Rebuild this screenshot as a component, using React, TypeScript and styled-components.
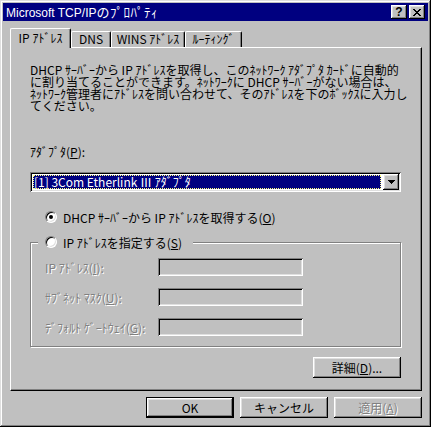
import React from 'react';
import styled, { createGlobalStyle, css } from 'styled-components';

const face = `"Noto Sans CJK JP", "Liberation Sans", sans-serif`;

const GlobalStyle = createGlobalStyle`
    html, body {
        margin: 0;
        padding: 0;
        background: #c0c0c0;
    }
    body {
        font-family: ${face};
        font-size: 12px;
        color: #000;
    }
`;

const raised = css`
    box-shadow: inset -1px -1px #000, inset 1px 1px #fff, inset -2px -2px #808080, inset 2px 2px #dfdfdf;
`;
const sunken = css`
    box-shadow: inset 1px 1px #808080, inset -1px -1px #fff, inset 2px 2px #000, inset -2px -2px #dfdfdf;
`;

const Window = styled.div`
    width: 431px;
    height: 427px;
    box-sizing: border-box;
    padding: 3px;
    background: #c0c0c0;
    box-shadow: inset -1px -1px #000, inset 1px 1px #dfdfdf, inset -2px -2px #808080, inset 2px 2px #fff;
    display: flex;
    flex-direction: column;
`;

const TitleBar = styled.div`
    height: 18px;
    display: flex;
    align-items: center;
    gap: 2px;
    padding: 0 3px 0 3px;
    background: #000080;
    color: #fff;
`;

const TitleText = styled.span`
    flex: 1;
    font-family: 'Liberation Sans', 'Noto Sans CJK JP', sans-serif;
    font-size: 12px;
    line-height: 18px;
    white-space: nowrap;
`;

const TitleKana = styled.span`
    font-family: 'Noto Sans CJK JP', sans-serif;
    font-size: 13px;
    letter-spacing: 0.5px;
`;

const CaptionButton = styled.div`
    width: 16px;
    height: 14px;
    box-sizing: border-box;
    background: #c0c0c0;
    color: #000;
    display: flex;
    align-items: center;
    justify-content: center;
    font: bold 12px 'Liberation Sans', sans-serif;
    line-height: 14px;
    ${raised}
`;

const Body = styled.div`
    display: flex;
    flex-direction: column;
    padding: 7px 5px 0 7px;
`;

const TabStrip = styled.div`
    display: flex;
    align-items: flex-end;
    height: 20px;
    margin-bottom: -1px;
    position: relative;
    z-index: 1;
`;

const Tab = styled.div<{ $w: number; $active?: boolean }>`
    width: ${(p) => p.$w}px;
    box-sizing: border-box;
    background: #c0c0c0;
    border-top: 1px solid #fff;
    border-left: 1px solid #fff;
    border-right: 1px solid #000;
    border-radius: 2px 2px 0 0;
    box-shadow: inset -1px 0 #808080;
    text-align: center;
    white-space: nowrap;
    line-height: 14px;
    ${(p) =>
        p.$active
            ? css`
                  height: 20px;
                  padding-top: 2px;
              `
            : css`
                  height: 16px;
                  margin-bottom: 1px;
                  padding-top: 0;
              `}
`;

const Panel = styled.div`
    width: 412px;
    box-sizing: border-box;
    border-top: 1px solid #fff;
    border-left: 1px solid #fff;
    border-right: 1px solid #000;
    border-bottom: 1px solid #000;
    box-shadow: inset -1px -1px #808080;
    padding: 16px 20px 12px 19px;
    display: flex;
    flex-direction: column;
`;

const Paragraph = styled.div`
    line-height: 12px;
    height: 48px;
`;

const Line = styled.div`
    white-space: nowrap;
`;

const FieldLabel = styled.div`
    margin-top: 34px;
    line-height: 12px;
    height: 12px;
`;

const U = styled.span`
    text-decoration: underline;
`;

const Select = styled.div`
    margin-top: 14px;
    height: 20px;
    box-sizing: border-box;
    padding: 2px;
    display: flex;
    background: #fff;
    ${sunken}
`;

const SelectValue = styled.div`
    flex: 1;
    margin: 1px 2px 1px 1px;
    background: #000080;
    color: #fff;
    outline: 1px dotted #ffff80;
    outline-offset: -1px;
    line-height: 14px;
    padding-left: 1px;
    white-space: nowrap;
`;

const DropButton = styled.div`
    width: 16px;
    height: 16px;
    box-sizing: border-box;
    background: #c0c0c0;
    display: flex;
    align-items: center;
    justify-content: center;
    ${raised}
`;

const RadioRow = styled.div<{ $top?: number }>`
    display: flex;
    align-items: center;
    gap: 6px;
    height: 14px;
    margin-top: ${(p) => p.$top ?? 0}px;
    padding-left: 15px;
    white-space: nowrap;
`;

const RadioCircle = styled.span`
    width: 12px;
    height: 12px;
    flex: none;
    box-sizing: border-box;
    border-radius: 50%;
    border: 1px solid;
    border-color: #808080 #fff #fff #808080;
    background: #fff;
    box-shadow: inset 1px 1px #000, inset -1px -1px #dfdfdf;
    display: flex;
    align-items: center;
    justify-content: center;
`;

const RadioDot = styled.span`
    width: 4px;
    height: 4px;
    border-radius: 50%;
    background: #000;
`;

const Group = styled.fieldset`
    margin: 11px 0 0 0;
    padding: 9px 10px 10px 7px;
    border: 1px solid #808080;
    box-shadow: inset 1px 1px #fff, 1px 1px #fff;
    display: flex;
    flex-direction: column;
    gap: 12px;
    min-width: 0;
`;

const GroupLegend = styled.legend`
    padding: 0 11px 0 7px;
    background: #c0c0c0;
    height: 14px;
    display: flex;
    align-items: center;
    gap: 6px;
    white-space: nowrap;
`;

const AddressRow = styled.div`
    display: flex;
    align-items: center;
    padding-left: 7px;
`;

const DisabledText = styled.span`
    color: #808080;
    text-shadow: 1px 1px 0 #fff;
    white-space: nowrap;
`;

const AddressLabel = styled(DisabledText)`
    width: 113px;
`;

const AddressBox = styled.div`
    width: 145px;
    height: 18px;
    box-sizing: border-box;
    background: #c0c0c0;
    ${sunken}
`;

const Button = styled.div<{ $default?: boolean; $disabled?: boolean }>`
    width: 88px;
    height: 21px;
    box-sizing: border-box;
    background: #c0c0c0;
    display: flex;
    align-items: center;
    justify-content: center;
    white-space: nowrap;
    ${raised}
    ${(p) =>
        p.$default &&
        css`
            border: 1px solid #000;
        `}
    ${(p) =>
        p.$disabled &&
        css`
            color: #808080;
            text-shadow: 1px 1px 0 #fff;
        `}
`;

const DetailRow = styled.div`
    display: flex;
    justify-content: flex-end;
    margin-top: 10px;
`;

const ButtonRow = styled.div`
    display: flex;
    justify-content: flex-end;
    gap: 6px;
    margin-top: 6px;
    width: 412px;
`;

const CloseGlyph = () => {
    const rows = [
        [0, 1, 6, 7],
        [1, 2, 5, 6],
        [2, 3, 4, 5],
        [3, 4],
        [2, 3, 4, 5],
        [1, 2, 5, 6],
        [0, 1, 6, 7],
    ];
    return (
        <svg width="8" height="7" viewBox="0 0 8 7" shapeRendering="crispEdges">
            {rows.map((xs, y) => xs.map((x) => <rect key={`${x}-${y}`} x={x} y={y} width="1" height="1" fill="#000" />))}
        </svg>
    );
};

const DownArrow = () => (
    <svg width="7" height="4" viewBox="0 0 7 4" shapeRendering="crispEdges">
        <rect x="0" y="0" width="7" height="1" fill="#000" />
        <rect x="1" y="1" width="5" height="1" fill="#000" />
        <rect x="2" y="2" width="3" height="1" fill="#000" />
        <rect x="3" y="3" width="1" height="1" fill="#000" />
    </svg>
);

const tabs = [
    { label: 'IP ｱﾄﾞﾚｽ', w: 61, active: true },
    { label: 'DNS', w: 40 },
    { label: 'WINS ｱﾄﾞﾚｽ', w: 74 },
    { label: 'ﾙｰﾃｨﾝｸﾞ', w: 57 },
];

const description = [
    'DHCP ｻｰﾊﾞｰから IP ｱﾄﾞﾚｽを取得し、このﾈｯﾄﾜｰｸ ｱﾀﾞﾌﾟﾀ ｶｰﾄﾞに自動的',
    'に割り当てることができます。ﾈｯﾄﾜｰｸに DHCP ｻｰﾊﾞｰがない場合は、',
    'ﾈｯﾄﾜｰｸ管理者にｱﾄﾞﾚｽを問い合わせて、そのｱﾄﾞﾚｽを下のﾎﾞｯｸｽに入力し',
    'てください。',
];

const addressFields = [
    { label: 'IP ｱﾄﾞﾚｽ', key: 'I' },
    { label: 'ｻﾌﾞﾈｯﾄ ﾏｽｸ', key: 'U' },
    { label: 'ﾃﾞﾌｫﾙﾄ ｹﾞｰﾄｳｪｲ', key: 'G' },
];

const App = () => {
    return (
        <>
            <GlobalStyle />
            <Window>
                <TitleBar>
                    <TitleText>
                        Microsoft TCP/IP<TitleKana>のﾌﾟﾛﾊﾟﾃｨ</TitleKana>
                    </TitleText>
                    <CaptionButton>?</CaptionButton>
                    <CaptionButton>
                        <CloseGlyph />
                    </CaptionButton>
                </TitleBar>
                <Body>
                    <TabStrip>
                        {tabs.map((t) => (
                            <Tab key={t.label} $w={t.w} $active={t.active}>
                                {t.label}
                            </Tab>
                        ))}
                    </TabStrip>
                    <Panel>
                        <Paragraph>
                            {description.map((l) => (
                                <Line key={l}>{l}</Line>
                            ))}
                        </Paragraph>
                        <FieldLabel>
                            ｱﾀﾞﾌﾟﾀ(<U>P</U>):
                        </FieldLabel>
                        <Select>
                            <SelectValue>[1] 3Com Etherlink Ⅲ ｱﾀﾞﾌﾟﾀ</SelectValue>
                            <DropButton>
                                <DownArrow />
                            </DropButton>
                        </Select>
                        <RadioRow $top={18}>
                            <RadioCircle>
                                <RadioDot />
                            </RadioCircle>
                            <span>
                                DHCP ｻｰﾊﾞｰから IP ｱﾄﾞﾚｽを取得する(<U>O</U>)
                            </span>
                        </RadioRow>
                        <Group>
                            <GroupLegend>
                                <RadioCircle />
                                <span>
                                    IP ｱﾄﾞﾚｽを指定する(<U>S</U>)
                                </span>
                            </GroupLegend>
                            {addressFields.map((f) => (
                                <AddressRow key={f.key}>
                                    <AddressLabel>
                                        {f.label}(<U>{f.key}</U>):
                                    </AddressLabel>
                                    <AddressBox />
                                </AddressRow>
                            ))}
                        </Group>
                        <DetailRow>
                            <Button>
                                詳細(<U>D</U>)...
                            </Button>
                        </DetailRow>
                    </Panel>
                    <ButtonRow>
                        <Button $default>OK</Button>
                        <Button>キャンセル</Button>
                        <Button $disabled>
                            適用(<U>A</U>)
                        </Button>
                    </ButtonRow>
                </Body>
            </Window>
        </>
    );
};

export default App;
